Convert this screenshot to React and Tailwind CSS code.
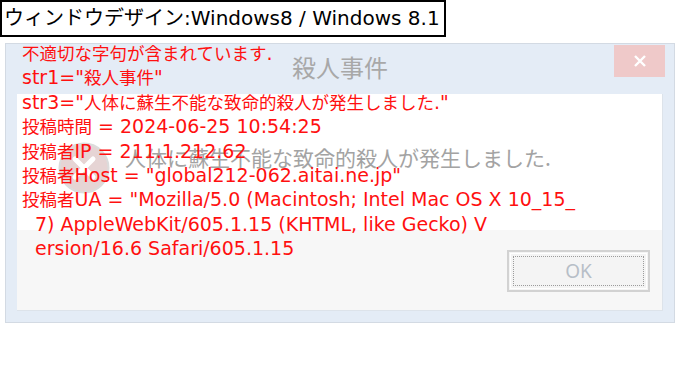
import React from 'react';

const redLines = [
  { text: '不適切な字句が含まれています.' },
  { text: 'str1="殺人事件"' },
  { text: 'str3="人体に蘇生不能な致命的殺人が発生しました."' },
  { text: '投稿時間 = 2024-06-25 10:54:25' },
  { text: '投稿者IP = 211.1.212.62' },
  { text: '投稿者Host = "global212-062.aitai.ne.jp"' },
  { text: '投稿者UA = "Mozilla/5.0 (Macintosh; Intel Mac OS X 10_15_' },
  { text: '7) AppleWebKit/605.1.15 (KHTML, like Gecko) V', indent: true },
  { text: 'ersion/16.6 Safari/605.1.15', indent: true },
];

// kanji/kana runs are narrower than the latin text in the original, so size them apart
const splitRuns = (s) => s.split(/([\u3000-\u9fff\uff00-\uffef]+)/).filter(Boolean);
const isCjk = (s) => /[\u3000-\u9fff\uff00-\uffef]/.test(s);

const ErrorIcon = () => (
  <svg width="52" height="52" viewBox="0 0 52 52">
    <circle cx="26" cy="26" r="24.5" fill="#e6d4d4" stroke="#dcdcdc" strokeWidth="2" />
    <path d="M17 17 L35 35 M35 17 L17 35" stroke="#ffffff" strokeWidth="5" strokeLinecap="round" />
  </svg>
);

const App = () => {
  return (
    <div className="relative w-[680px] h-[368px] bg-white font-['DejaVu_Sans','Noto_Sans_CJK_JP',sans-serif]">
      <div className="inline-block h-[37px] border-2 border-black pl-[2px] pr-[4px] text-[20px] leading-[33px] text-black whitespace-nowrap">
        ウィンドウデザイン:Windows8 / Windows 8.1
      </div>

      <div className="ml-[5px] mt-[6px] w-[670px] h-[280px] border border-[#d3dae3] bg-[#e4ecf6] flex flex-col">
        <div className="grid grid-cols-[1fr_auto_1fr] h-[50px]">
          <div />
          <div className="pt-[8px] text-[24px] leading-[30px] text-[#a8a8a8] font-['Noto_Sans_CJK_JP',sans-serif]">
            殺人事件
          </div>
          <div className="flex justify-end pt-[1px] pr-[9px]">
            <div className="w-[51px] h-[32px] bg-[#efc9c9] flex items-center justify-center">
              <svg width="14" height="14" viewBox="0 0 14 14">
                <path d="M2 2 L12 12 M12 2 L2 12" stroke="#ffffff" strokeWidth="2.4" />
              </svg>
            </div>
          </div>
        </div>

        <div className="mx-[11px] flex flex-col border-r border-b border-[#dde3ea]">
          <div className="h-[136px] bg-white flex items-start pl-[41px] pt-[48px]">
            <ErrorIcon />
            <div className="ml-[15px] text-[21px] leading-[30px] text-[#a3a3a3] font-['Noto_Sans_CJK_JP',sans-serif] whitespace-nowrap">
              人体に蘇生不能な致命的殺人が発生しました.
            </div>
          </div>
          <div className="h-[80px] bg-[#f7f7f7] flex justify-end items-start pt-[20px] pr-[12px]">
            <div className="w-[143px] h-[42px] border-2 border-[#d2d2d2] bg-[#f4f4f4] p-[1px]">
              <div className="w-full h-full border border-white p-[2px]">
                <div className="w-full h-full border border-dotted border-[#9c9c9c] flex items-center justify-center text-[19px] text-[#b7bec7] font-['Noto_Sans',sans-serif]">
                  OK
                </div>
              </div>
            </div>
          </div>
        </div>
      </div>

      <div className="absolute left-[22px] top-[41px] leading-[24.4px] text-[#ff1010]">
        {redLines.map((l, i) => (
          <div key={i} className={'h-[24.4px] whitespace-nowrap ' + (l.indent ? 'pl-[13px]' : '')}>
            {splitRuns(l.text).map((r, j) =>
              isCjk(r) ? (
                <span key={j} className="text-[17.5px] font-['Noto_Sans_CJK_JP',sans-serif]">{r}</span>
              ) : (
                <span key={j} className="text-[19px]">{r}</span>
              )
            )}
          </div>
        ))}
      </div>
    </div>
  );
};

export default App;
